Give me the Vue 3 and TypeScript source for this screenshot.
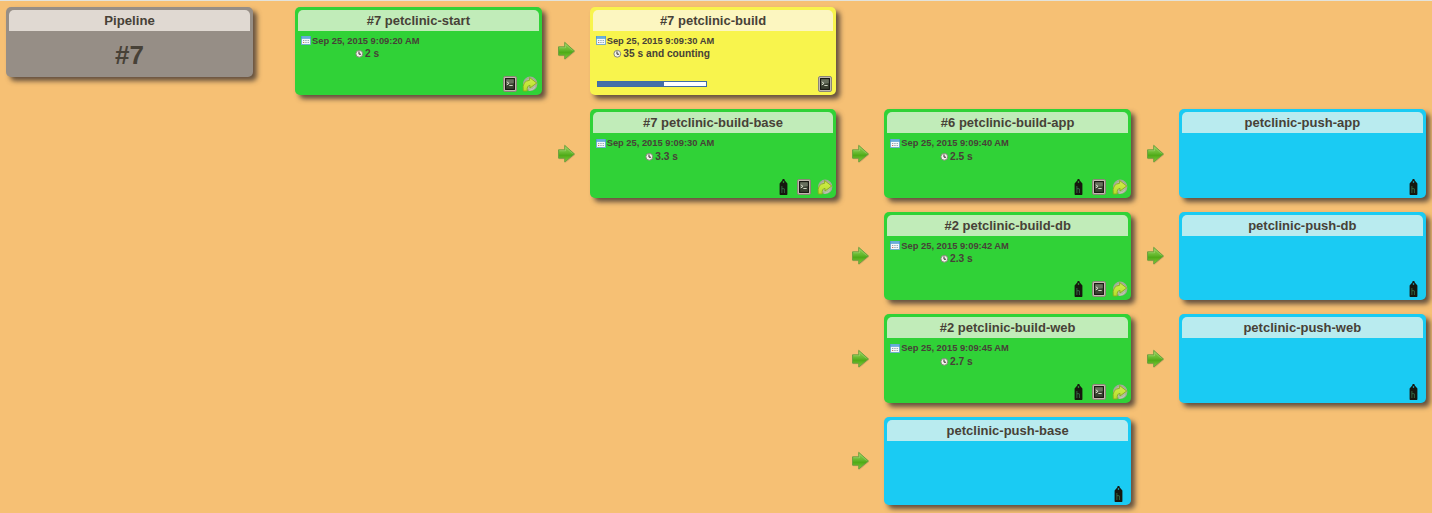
<script setup lang="ts">
type Tone = 'green' | 'yellow' | 'blue'
type Action = 'tag' | 'console' | 'rerun'

interface Build {
  title: string
  tone: Tone
  row: number
  col: number
  date?: string
  duration?: string
  progress?: number
  actions: Action[]
}

const builds: Build[] = [
  { title: '#7 petclinic-start', tone: 'green', row: 1, col: 1, date: 'Sep 25, 2015 9:09:20 AM', duration: '2 s', actions: ['console', 'rerun'] },
  { title: '#7 petclinic-build', tone: 'yellow', row: 1, col: 2, date: 'Sep 25, 2015 9:09:30 AM', duration: '35 s and counting', progress: 61, actions: ['console'] },
  { title: '#7 petclinic-build-base', tone: 'green', row: 2, col: 2, date: 'Sep 25, 2015 9:09:30 AM', duration: '3.3 s', actions: ['tag', 'console', 'rerun'] },
  { title: '#6 petclinic-build-app', tone: 'green', row: 2, col: 3, date: 'Sep 25, 2015 9:09:40 AM', duration: '2.5 s', actions: ['tag', 'console', 'rerun'] },
  { title: 'petclinic-push-app', tone: 'blue', row: 2, col: 4, actions: ['tag'] },
  { title: '#2 petclinic-build-db', tone: 'green', row: 3, col: 3, date: 'Sep 25, 2015 9:09:42 AM', duration: '2.3 s', actions: ['tag', 'console', 'rerun'] },
  { title: 'petclinic-push-db', tone: 'blue', row: 3, col: 4, actions: ['tag'] },
  { title: '#2 petclinic-build-web', tone: 'green', row: 4, col: 3, date: 'Sep 25, 2015 9:09:45 AM', duration: '2.7 s', actions: ['tag', 'console', 'rerun'] },
  { title: 'petclinic-push-web', tone: 'blue', row: 4, col: 4, actions: ['tag'] },
  { title: 'petclinic-push-base', tone: 'blue', row: 5, col: 3, actions: ['tag'] },
]

const linked = builds.filter((b) => b.col > 1)

// Card columns alternate with arrow columns in the grid.
const cardCell = (b: Build) => ({ gridRow: b.row, gridColumn: b.col * 2 + 1 })
const arrowCell = (b: Build) => ({ gridRow: b.row, gridColumn: b.col * 2 })
</script>

<template>
  <main class="pipeline">
    <svg class="defs" width="0" height="0" aria-hidden="true">
      <defs>
        <linearGradient id="arrowFill" x1="0" y1="0" x2="0" y2="1">
          <stop offset="0" stop-color="#8fd04e" />
          <stop offset=".45" stop-color="#66b92f" />
          <stop offset=".6" stop-color="#4faa18" />
          <stop offset="1" stop-color="#7fcf35" />
        </linearGradient>
        <linearGradient id="rerunFill" x1="0" y1="0" x2="0" y2="1">
          <stop offset="0" stop-color="#d2ee4c" />
          <stop offset="1" stop-color="#b4de2a" />
        </linearGradient>
      </defs>
    </svg>

    <section class="card summary">
      <h2 class="title">Pipeline</h2>
      <div class="number">#7</div>
    </section>

    <div v-for="b in linked" :key="'arrow' + b.title" class="link" :style="arrowCell(b)">
      <svg class="arrow" width="19" height="20" viewBox="0 0 19 20">
        <path d="M2 7 H8.2 V2.2 L18 11 L8.2 19.3 V15.2 H2 Z" fill="#6b5030" opacity=".2" />
        <path d="M1.5 5.8 H7.7 V1.3 L17.5 10 L7.7 18 V14.2 H1.5 Z" fill="url(#arrowFill)" stroke="#6a9c40" stroke-width=".9" />
        <path d="M2.4 6.8 H8.6 V3.4 L15.6 9.6" fill="none" stroke="#c6e69b" stroke-width=".7" opacity=".5" />
      </svg>
    </div>

    <section v-for="b in builds" :key="b.title" class="card" :class="b.tone" :style="cardCell(b)">
      <h2 class="title">{{ b.title }}</h2>
      <div v-if="b.date" class="times">
        <div class="date">
          <svg width="10" height="9" viewBox="0 0 10 9">
            <rect x=".5" y=".5" width="9" height="8" fill="#f3f8fa" stroke="#6da8cf" stroke-width=".9" />
            <rect x=".2" y=".2" width="9.6" height="2.5" fill="#4497cf" />
            <rect x="1" y=".7" width="8" height=".7" fill="#9ed0ef" />
            <path d="M2 4.5h1.3M4.3 4.5h1.3M6.6 4.5h1.3M4.3 6.5h1.3M6.6 6.5h1.3" stroke="#8ea3b0" />
            <path d="M2 6.5h1.3" stroke="#cf765f" />
          </svg>
          <span>{{ b.date }}</span>
        </div>
        <div class="duration">
          <svg width="9" height="9" viewBox="0 0 9 9">
            <circle cx="4.3" cy="4.8" r="3.4" fill="#f4f4ed" stroke="#85877a" stroke-width="1" />
            <path d="M4 2.4V5.2H6.1" fill="none" stroke="#302d2b" stroke-width="1" />
          </svg>
          <span>{{ b.duration }}</span>
        </div>
      </div>
      <footer class="footer">
        <div v-if="b.progress" class="progress">
          <div class="bar" :style="{ width: b.progress + '%' }"></div>
        </div>
        <div class="actions">
          <span v-for="a in b.actions" :key="a" class="action">
            <svg v-if="a === 'tag'" width="9" height="16" viewBox="0 0 9 16">
              <path fill-rule="evenodd" d="M3.7 0h1.6l.5 1.6L8.4 4.6V15.3Q8.4 16 7.7 16H1.3Q.6 16 .6 15.3V4.6L3.2 1.6Z M4.5 2.2a.8.8 0 1 0 0 1.6a.8.8 0 1 0 0-1.6Z" fill="#16170f" />
              <path d="M2.9 7V14M5.4 10V14M2.9 9.7h2.5" fill="none" stroke="#3f8457" stroke-width=".7" />
            </svg>
            <svg v-else-if="a === 'console'" width="14" height="16" viewBox="0 0 14 16">
              <rect x=".5" y=".5" width="13" height="15" rx="1.5" fill="#c2baae" stroke="#8b8678" />
              <rect x="2.6" y="2.6" width="8.8" height="10.8" fill="#3b4232" stroke="#14160f" stroke-width="1.1" />
              <path d="M3.2 3.2h7.6v4Q7 7 3.2 9Z" fill="#7c8470" opacity=".7" />
              <path d="M3.8 5.8L6 7.4L3.8 9M6.3 9.5h3.4" fill="none" stroke="#e0e4d2" stroke-width=".9" />
            </svg>
            <svg v-else width="16" height="16" viewBox="0 0 16 16">
              <circle cx="8.2" cy="7.8" r="6.4" fill="#b0bd9c" stroke="#a2aa98" stroke-width="1.6" />
              <path d="M1.3 15Q-.2 4.8 7.6 4.3V1.6L14.7 7L8 12V9.4Q4.6 9.6 5.2 15Z" fill="url(#rerunFill)" stroke="#87ad1d" stroke-width=".9" stroke-linejoin="round" />
              <path d="M7.2 14.2Q11.2 14.2 13.4 11" fill="none" stroke="#c9cbb8" stroke-width="1" />
            </svg>
          </span>
        </div>
      </footer>
    </section>
  </main>
</template>

<style>
body {
  margin: 0;
  background: #f6c074;
  overflow: hidden;
}
</style>

<style scoped>
.pipeline {
  box-sizing: border-box;
  width: 1432px;
  height: 513px;
  padding: 5.7px 0 0 6px;
  border-top: 1px solid #e3e3db;
  background: #f6c074;
  display: grid;
  grid-template-columns: 247px 42px 246.67px 48px 246.67px 48px 246.67px 48px 246.67px;
  grid-template-rows: repeat(5, 88.5px);
  row-gap: 14px;
  font-family: "Liberation Sans", Arial, sans-serif;
  font-weight: bold;
  color: #474137;
  overflow: hidden;
}

.defs {
  position: absolute;
}

.card {
  box-sizing: border-box;
  min-width: 0;
  padding: 3px;
  border-radius: 5px;
  box-shadow: 4px 4px 5px rgba(60, 50, 48, 0.78);
  display: flex;
  flex-direction: column;
}

.title {
  margin: 0;
  height: 21px;
  flex: none;
  border-radius: 5px 5px 0 0;
  font-size: 13px;
  line-height: 21px;
  text-align: center;
}

.green { background: #30d237; }
.green .title { background: #c1ecb9; }
.yellow { background: #f8f44d; }
.yellow .title { background: #fcf6c0; }
.blue { background: #1acbf3; }
.blue .title { background: #b9ebef; }

.summary {
  grid-row: 1;
  grid-column: 1;
  height: 70px;
  background: #968e86;
}

.summary .title {
  background: #e0d9d2;
  font-size: 13.2px;
}

.number {
  font-size: 26px;
  line-height: 48px;
  text-align: center;
}

.link {
  display: flex;
  align-items: center;
  padding: 0.6px 0 0 15px;
}

.arrow {
  display: block;
}

.times {
  padding: 3.6px 0 0 3px;
}

.date,
.duration {
  display: flex;
  align-items: center;
  white-space: nowrap;
}

.date {
  height: 13px;
  gap: 1px;
  font-size: 9.33px;
}

.duration {
  width: 132px;
  height: 12.7px;
  justify-content: center;
  gap: 1px;
  font-size: 10.2px;
}

.footer {
  margin-top: auto;
  margin-bottom: -1.4px;
  height: 19px;
  display: flex;
  align-items: center;
}

.progress {
  box-sizing: border-box;
  width: 110px;
  height: 6px;
  margin-left: 4px;
  border: 1px solid #3f6ca5;
  background: #fff;
}

.bar {
  height: 100%;
  background: #456fa6;
}

.actions {
  margin-left: auto;
  margin-right: -2px;
  display: flex;
}

.blue .actions {
  margin-right: -1px;
}

.action {
  width: 20.7px;
  height: 16px;
  display: flex;
  justify-content: center;
}
</style>
